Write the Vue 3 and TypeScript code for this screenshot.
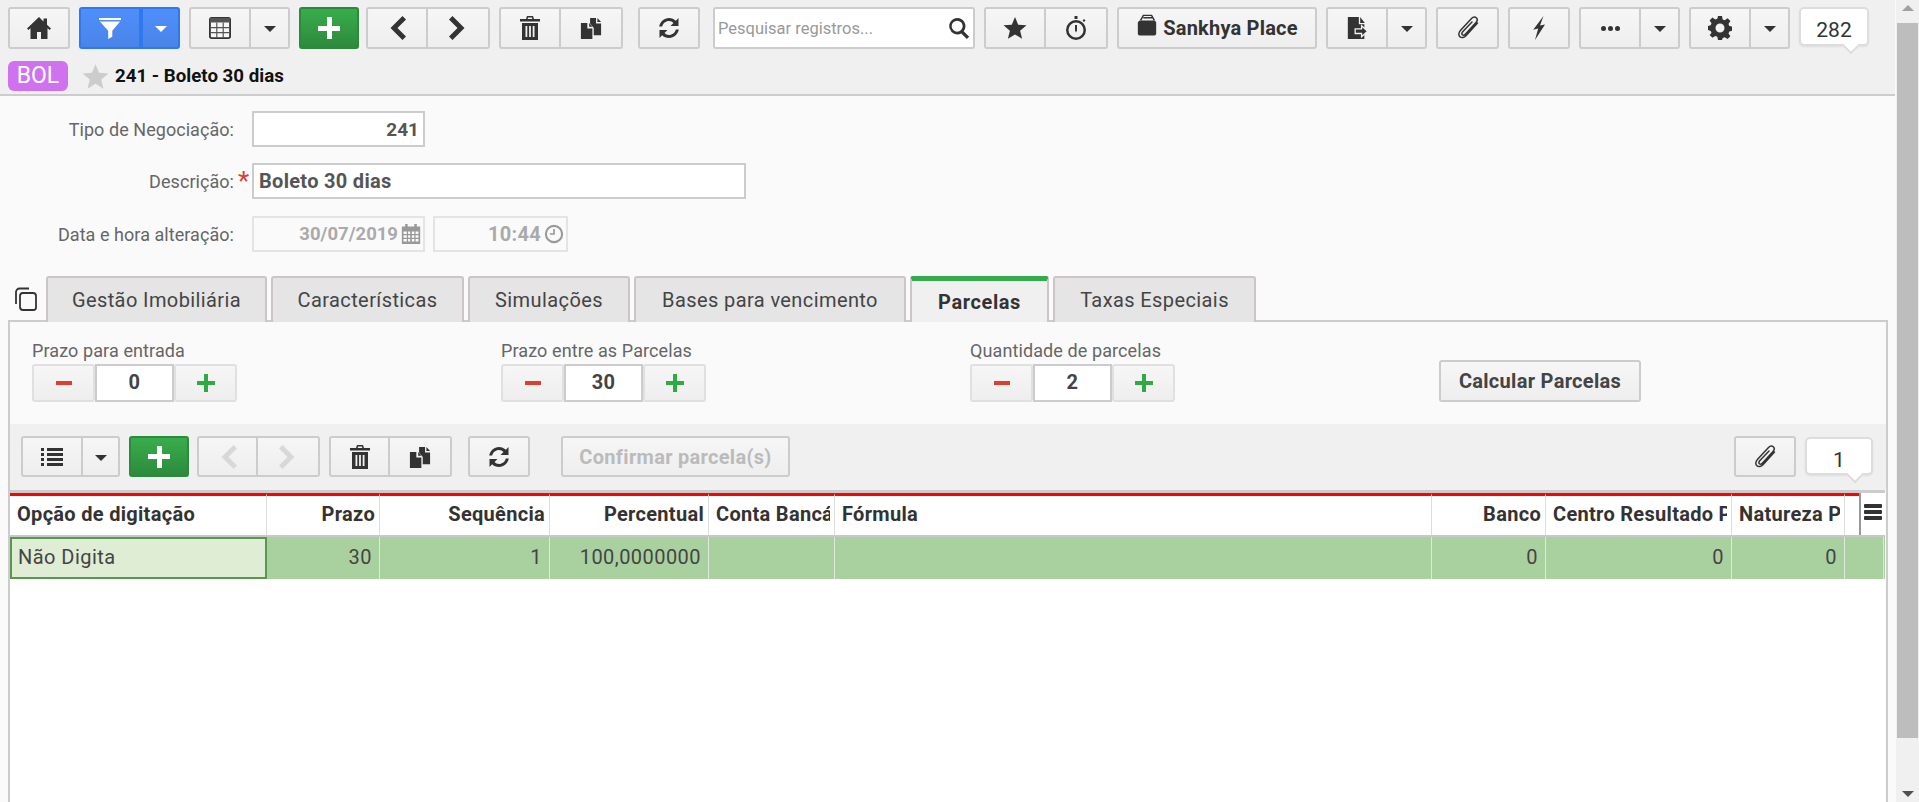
<script setup lang="ts">
interface Col { name: string; width: number; right: boolean; value: string }
const cols: Col[] = [
  { name: 'Opção de digitação', width: 257, right: false, value: 'Não Digita' },
  { name: 'Prazo', width: 113, right: true, value: '30' },
  { name: 'Sequência', width: 170, right: true, value: '1' },
  { name: 'Percentual', width: 159, right: true, value: '100,0000000' },
  { name: 'Conta Bancária', width: 126, right: false, value: '' },
  { name: 'Fórmula', width: 597, right: false, value: '' },
  { name: 'Banco', width: 114, right: true, value: '0' },
  { name: 'Centro Resultado Padrão', width: 186, right: false, value: '0' },
  { name: 'Natureza Padrão', width: 113, right: false, value: '0' },
  { name: '', width: 39, right: false, value: '' },
]
const template = cols.map((c) => c.width + 'px').join(' ')
const steppers = [
  { label: 'Prazo para entrada', value: '0', cls: 's1' },
  { label: 'Prazo entre as Parcelas', value: '30', cls: 's2' },
  { label: 'Quantidade de parcelas', value: '2', cls: 's3' },
]
const tabs = [
  { name: 'Gestão Imobiliária', cls: 't1' },
  { name: 'Características', cls: 't2' },
  { name: 'Simulações', cls: 't3' },
  { name: 'Bases para vencimento', cls: 't4' },
  { name: 'Parcelas', cls: 't5 active' },
  { name: 'Taxas Especiais', cls: 't6' },
]
</script>

<template>
  <div class="root">
    <svg class="defs" width="0" height="0">
      <defs>
        <symbol id="i-home" viewBox="0 0 24 24"><path d="M12 1 0 12.600l1.400 1.400L3.500 12.200V23H10v-7h4v7h6.500V12.200l2.100 1.800L24 12.600l-4-3.800V2.500h-3.500v3z"/></symbol>
        <symbol id="i-filter" viewBox="0 0 24 24"><path d="M0 1h24v2.300H0zM1 5h22l-8.500 10v6.500L10 24v-9z"/></symbol>
        <symbol id="i-grid" viewBox="0 0 24 24"><rect x="1" y="1" width="22" height="22" rx="2" fill="#f7f7f7" stroke="#333" stroke-width="2"/><path fill="#555" d="M1 1h22v5H1z"/><path fill="none" stroke="#555" stroke-width="1.300" d="M1 11.500h22M1 17h22M8.500 6v17M15.500 6v17"/></symbol>
        <symbol id="i-left" viewBox="0 0 24 24"><path d="M17.500 0 21 3.500 12.500 12l8.500 8.500-3.500 3.500L5.500 12z"/></symbol>
        <symbol id="i-right" viewBox="0 0 24 24"><path d="M6.500 0 3 3.500 11.500 12 3 20.500 6.500 24l12-12z"/></symbol>
        <symbol id="i-trash" viewBox="0 0 24 24"><path fill-rule="evenodd" d="M9 0h6l1 3h6v2.500H2V3h6zm1 1.500L9.700 3h4.600L14 1.500zM4 7h16v17H4zm3.500 3v11h1.800V10zm3.600 0v11h1.800V10zm3.600 0v11h1.800V10z"/></symbol>
        <symbol id="i-copy" viewBox="0 0 24 24"><path d="M1 6.500h7v6h5.500V24H1zM10 6.500l3.500 4H10zM11 1h6.500v6H23v13h-8V12l-4-5zM19 1l4 4.500h-4z"/></symbol>
        <symbol id="i-refresh" viewBox="0 0 24 24"><path d="M12 2c2.700 0 5.100 1.100 6.900 2.800L21.500 2v8h-8l3-3C15.400 5.800 13.800 5 12 5 8.700 5 6 7.300 5.200 10.500H2.200C3 5.700 7.100 2 12 2zM2.500 22v-8h8l-3 3c1.100 1.200 2.700 2 4.500 2 3.300 0 6-2.300 6.800-5.500h3C21 18.300 16.900 22 12 22c-2.700 0-5.100-1.100-6.900-2.800z"/></symbol>
        <symbol id="i-search" viewBox="0 0 24 24"><path fill-rule="evenodd" d="M10 1a9 9 0 0 1 7.100 14.500l6 6-2.600 2.500-6-6A9 9 0 1 1 10 1zm0 3a6 6 0 1 0 0 12 6 6 0 0 0 0-12z"/></symbol>
        <symbol id="i-star" viewBox="0 0 24 24"><path d="m12 1 3.200 7.700 8.300.6-6.400 5.400 2 8.100L12 18.500 4.900 22.800l2-8.100L.5 9.300l8.300-.6z"/></symbol>
        <symbol id="i-watch" viewBox="0 0 24 24"><path fill-rule="evenodd" d="M10.500 0h3v3h-3zM20 3l1.500 1.500-1.500 1.500L18.500 4.500zM12 4a10 10 0 1 1 0 20 10 10 0 0 1 0-20zm0 2.500a7.500 7.500 0 1 0 0 15 7.500 7.500 0 0 0 0-15zM11 9h2v5.500l-1 2-1-2z"/></symbol>
        <symbol id="i-bag" viewBox="0 0 24 24"><path d="M4 7h16.500l1.500 2v12.500a2 2 0 0 1-2 2H4a2 2 0 0 1-2-2V9z"/><path fill="none" stroke="#333" stroke-width="1.600" d="M5 7 8 1.500h9L20 7M8 4h11"/></symbol>
        <symbol id="i-export" viewBox="0 0 24 24"><path d="M2 0h12v8h6v16H2zM15.500 0l5 6.500h-5z"/><path fill="#333" stroke="#f2f2f2" stroke-width="1.400" d="M10 13h7v-3.500l6.500 6-6.500 6V18h-7z"/></symbol>
        <symbol id="i-clip" viewBox="0 0 24 24"><path fill="none" stroke="currentColor" stroke-width="1.500" stroke-linecap="round" d="M21.500 7 10.200 19.500c-2 2.200-4.700 2.700-6.300 1.200-1.700-1.500-1.300-4.200.7-6.400L15.500 2.500c1.400-1.500 3.500-1.900 4.800-.7 1.300 1.200 1.100 3.200-.3 4.800L9.300 18.200c-.9 1-2.100 1.200-2.900.5-.7-.7-.6-1.900.3-2.900L16 6"/></symbol>
        <symbol id="i-bolt" viewBox="0 0 24 24"><path d="M16.500 0 13 9.500l5-1L8 24l3.200-11.500-5 1.200z"/></symbol>
        <symbol id="i-gear" viewBox="0 0 24 24"><path fill-rule="evenodd" d="M10 0h4l.7 3.400 2 .8L19.600 2.300l2.800 2.800-1.900 2.900.8 2 3.400.7v4l-3.400.7-.8 2 1.900 2.900-2.800 2.800-2.900-1.900-2 .8L14 24h-4l-.7-3.300-2-.8-2.900 1.900-2.800-2.800L3.500 17l-.8-2L0 14v-4l2.700-.7.800-2-1.900-2.900 2.800-2.800 2.900 1.900 2-.8zM12 7.500a4.500 4.500 0 1 0 0 9 4.500 4.500 0 0 0 0-9z"/></symbol>
        <symbol id="i-list" viewBox="0 0 24 24"><path d="M1 3h3v3H1zM7 3h16v3H7zM1 8h3v3H1zM7 8h16v3H7zM1 13h3v3H1zM7 13h16v3H7zM1 18h3v3H1zM7 18h16v3H7z"/></symbol>
        <symbol id="i-cal" viewBox="0 0 24 24"><path fill-rule="evenodd" d="M5 0h3v3h8V0h3v3h4v21H1V3h4zM3 9v3h4V9zm5.500 0v3H11V9zm4.500 0v3h3V9zm4.500 0v3H21V9zM3 13.500v3h4v-3zm5.500 0v3H11v-3zm4.500 0v3h3v-3zm4.500 0v3H21v-3zM3 18v3h4v-3zm5.500 0v3H11v-3zm4.500 0v3h3v-3zm4.500 0v3H21v-3z"/></symbol>
        <symbol id="i-clock" viewBox="0 0 24 24"><path fill-rule="evenodd" d="M12 1a11 11 0 1 1 0 22 11 11 0 0 1 0-22zm0 2.500a8.500 8.500 0 1 0 0 17 8.500 8.500 0 0 0 0-17zM11 6h2v7H7v-2h4z"/></symbol>
        <symbol id="i-tabs" viewBox="0 0 24 24"><path fill="none" stroke="currentColor" stroke-width="1.800" d="M2 17V5a3.500 3.500 0 0 1 3.500-3.500H15M9 6h10a3 3 0 0 1 3 3v11.500a2.500 2.500 0 0 1-2.500 2.500H9a3 3 0 0 1-3-3V9a3 3 0 0 1 3-3z"/></symbol>
      </defs>
    </svg>

    <main class="page">
      <header class="head">
        <div class="toolbar">
          <button class="btn w62"><svg class="ic i24"><use href="#i-home" /></svg></button>
          <div class="group blue">
            <button class="btn w62"><svg class="ic i22"><use href="#i-filter" /></svg></button>
            <button class="btn caret-btn"><i class="caret"></i></button>
          </div>
          <div class="group">
            <button class="btn w62"><svg class="ic i22"><use href="#i-grid" /></svg></button>
            <button class="btn caret-btn"><i class="caret"></i></button>
          </div>
          <button class="btn green w60"><span class="plus"></span></button>
          <div class="group tight">
            <button class="btn w62"><svg class="ic i24"><use href="#i-left" /></svg></button>
            <button class="btn w62"><svg class="ic i24"><use href="#i-right" /></svg></button>
          </div>
          <div class="group">
            <button class="btn w62"><svg class="ic i24"><use href="#i-trash" /></svg></button>
            <button class="btn w62"><svg class="ic i22"><use href="#i-copy" /></svg></button>
          </div>
          <button class="btn w62 ml16"><svg class="ic i24"><use href="#i-refresh" /></svg></button>
          <div class="search ml13">
            <span>Pesquisar registros...</span>
            <svg class="ic i22 dark"><use href="#i-search" /></svg>
          </div>
          <div class="group">
            <button class="btn w62"><svg class="ic i24"><use href="#i-star" /></svg></button>
            <button class="btn w62"><svg class="ic i24"><use href="#i-watch" /></svg></button>
          </div>
          <button class="btn place">
            <svg class="ic i22 bag"><use href="#i-bag" /></svg>Sankhya Place
          </button>
          <div class="group">
            <button class="btn w62"><svg class="ic i22"><use href="#i-export" /></svg></button>
            <button class="btn caret-btn"><i class="caret"></i></button>
          </div>
          <button class="btn w63"><svg class="ic i24"><use href="#i-clip" /></svg></button>
          <button class="btn w62"><svg class="ic i24"><use href="#i-bolt" /></svg></button>
          <div class="group">
            <button class="btn w62"><span class="dots"><i></i><i></i><i></i></span></button>
            <button class="btn caret-btn"><i class="caret"></i></button>
          </div>
          <div class="group">
            <button class="btn w62"><svg class="ic i24"><use href="#i-gear" /></svg></button>
            <button class="btn caret-btn"><i class="caret"></i></button>
          </div>
          <div class="count count-top"><span>282</span></div>
        </div>
        <div class="title-row">
          <span class="badge">BOL</span>
          <svg class="ic title-star"><use href="#i-star" /></svg>
          <span class="title">241 - Boleto 30 dias</span>
        </div>
      </header>

      <section class="form">
        <div class="form-row r1">
          <label>Tipo de Negociação:</label>
          <div class="input code">241</div>
        </div>
        <div class="form-row r2">
          <label>Descrição:</label>
          <span class="req">*</span>
          <div class="input desc">Boleto 30 dias</div>
        </div>
        <div class="form-row r3">
          <label>Data e hora alteração:</label>
          <div class="input off date">30/07/2019<svg class="ic i20 mut"><use href="#i-cal" /></svg></div>
          <div class="input off time">10:44<svg class="ic i20 mut"><use href="#i-clock" /></svg></div>
        </div>
      </section>

      <div class="tabs">
        <svg class="ic tabs-ic"><use href="#i-tabs" /></svg>
        <div v-for="t in tabs" :key="t.name" class="tab" :class="t.cls">{{ t.name }}</div>
      </div>

      <section class="panel">
        <div class="params">
          <div v-for="s in steppers" :key="s.label" class="param" :class="s.cls">
            <div class="param-label">{{ s.label }}</div>
            <div class="stepper">
              <button class="st-btn"><span class="minus"></span></button>
              <div class="st-val">{{ s.value }}</div>
              <button class="st-btn"><span class="plus small"></span></button>
            </div>
          </div>
          <button class="btn calc">Calcular Parcelas</button>
        </div>

        <div class="subbar">
          <div class="group first">
            <button class="btn w62"><svg class="ic i24"><use href="#i-list" /></svg></button>
            <button class="btn caret-btn"><i class="caret"></i></button>
          </div>
          <button class="btn green w60"><span class="plus"></span></button>
          <div class="group nudge">
            <button class="btn w61"><svg class="ic i24 faint"><use href="#i-left" /></svg></button>
            <button class="btn w62"><svg class="ic i24 faint"><use href="#i-right" /></svg></button>
          </div>
          <div class="group">
            <button class="btn w61"><svg class="ic i24"><use href="#i-trash" /></svg></button>
            <button class="btn w62"><svg class="ic i22"><use href="#i-copy" /></svg></button>
          </div>
          <button class="btn w62 ml16sub"><svg class="ic i24"><use href="#i-refresh" /></svg></button>
          <button class="btn confirm">Confirmar parcela(s)</button>
          <button class="btn w62 push"><svg class="ic i24"><use href="#i-clip" /></svg></button>
          <div class="count count-sub"><span>1</span></div>
        </div>

        <div class="grid">
          <div class="grid-head" :style="{ gridTemplateColumns: template }">
            <div v-for="c in cols" :key="c.name" class="th" :class="{ right: c.right }"><span>{{ c.name }}</span></div>
            <div class="grid-menu"><i></i><i></i><i></i></div>
          </div>
          <div class="grid-row" :style="{ gridTemplateColumns: template }">
            <div v-for="(c, i) in cols" :key="c.name" class="td" :class="{ right: c.value !== '' && i > 0, sel: i === 0 }">{{ c.value }}</div>
          </div>
        </div>
      </section>
    </main>

    <aside class="scroll">
      <i class="arrow up"></i>
      <div class="thumb"></div>
      <i class="arrow down"></i>
    </aside>
  </div>
</template>

<style>
html, body { margin: 0; height: 100%; overflow: hidden; background: #fafafa; }
</style>

<style scoped>
.root { display: flex; width: 1919px; height: 802px; overflow: hidden; font-family: Roboto, "Liberation Sans", sans-serif; color: #444; background: #fafafa; }
.defs { position: absolute; }
.page { width: 1896px; flex: none; display: flex; flex-direction: column; }

.ic { display: block; fill: #333; color: #333; flex: none; }
.i20 { width: 20px; height: 20px; }
.i22 { width: 22px; height: 22px; }
.i24 { width: 24px; height: 24px; }
.faint { fill: #d8d8d8; color: #d8d8d8; }
.mut { fill: #999; color: #999; }

.head { height: 94px; border-bottom: 2px solid #ccc; background: #f0f0f0; margin-right: 1px; }
.toolbar { display: flex; align-items: flex-start; gap: 9px; padding: 7px 0 0 8px; height: 42px; }
.btn { display: flex; align-items: center; justify-content: center; height: 42px; padding: 0; box-sizing: border-box; border: 2px solid #ccc; border-radius: 3px; background: linear-gradient(#f6f6f6, #eee); font: inherit; }
.w60 { width: 60px; }
.w61 { width: 61px; }
.w62 { width: 62px; }
.w63 { width: 63px; }
.ml16 { margin-left: 6px; }
.ml16sub { margin-left: 7px; }
.ml13 { margin-left: 4px; }
.tight { margin-left: -2px; }
.nudge { margin-left: -1px; }
.group { display: flex; }
.group .btn { border-radius: 0; }
.group .btn:first-child { border-radius: 3px 0 0 3px; }
.group .btn:last-child { border-radius: 0 3px 3px 0; border-left: 0; }
.caret-btn { width: 39px; }
.first .caret-btn { width: 37px; }
.caret { width: 0; height: 0; border: 6px solid transparent; border-top: 6px solid #333; border-bottom: 0; display: block; margin-top: 2px; }
.blue .btn { background: linear-gradient(#4f8ffb, #4984e8); border-color: #2f78ee; }
.blue .btn:last-child { border-left: 2px solid #2f78ee; width: 39px; }
.blue .ic { fill: #fff; }
.blue .caret { border-top-color: #fff; }
.green { background: linear-gradient(#38ad4c, #2d8a3d); border-color: #2b8a3b; }
.plus { display: block; width: 22px; height: 22px; background: linear-gradient(#fff, #fff) center / 100% 5px no-repeat, linear-gradient(#fff, #fff) center / 5px 100% no-repeat; }
.plus.small { width: 18px; height: 18px; background: linear-gradient(#2faa44, #2faa44) center / 100% 4px no-repeat, linear-gradient(#2faa44, #2faa44) center / 4px 100% no-repeat; }
.minus { display: block; width: 16px; height: 4px; background: #d9402f; }

.search { display: flex; align-items: center; justify-content: space-between; width: 262px; height: 42px; box-sizing: border-box; border: 2px solid #ccc; border-radius: 3px; background: #fff; padding: 0 3px 0 3px; font-size: 16.5px; color: #999; }
.dark { fill: #333; }
.place { width: 200px; font-size: 20px; font-weight: 700; color: #333; letter-spacing: .2px; }
.bag { margin-right: 5px; margin-top: -7px; }
.dots { display: flex; gap: 2px; }
.dots i { width: 5px; height: 5px; border-radius: 50%; background: #333; display: block; }

.count { position: relative; background: #fff; border: 2px solid #ddd; border-radius: 5px; box-sizing: border-box; text-align: center; color: #333; box-shadow: 0 1px 2px rgba(0,0,0,.08); }
.count span { position: relative; z-index: 1; }
.count::after { content: ""; position: absolute; box-sizing: border-box; width: 12px; height: 12px; background: #fff; border-right: 2px solid #ddd; border-bottom: 2px solid #ddd; transform: rotate(45deg); right: 10px; bottom: -8px; }
.count-top { width: 70px; height: 39px; font-size: 21px; line-height: 42px; }
.count-sub { width: 68px; height: 38px; font-size: 21px; line-height: 42px; margin-top: 1px; margin-right: 13px; }

.title-row { display: flex; align-items: center; height: 30px; margin: 12px 0 0 8px; }
.badge { width: 60px; height: 30px; background: #d071f0; color: #fff; border-radius: 6px; text-align: center; font-size: 23px; line-height: 30px; }
.title-star { width: 27px; height: 27px; margin-left: 14px; fill: #ccc; color: #ccc; }
.title { margin-left: 6px; font-size: 18.7px; font-weight: 700; color: #111; }

.form { padding-top: 15px; height: 180px; box-sizing: border-box; }
.form-row { display: flex; align-items: center; height: 36px; position: relative; padding-left: 252px; }
.form-row label { position: absolute; right: calc(100% - 234px); white-space: nowrap; font-size: 18px; letter-spacing: .05px; color: #666; }
.r2 { margin-top: 16px; }
.r3 { margin-top: 17px; }
.req { position: absolute; left: 238px; top: 5px; color: #d9402f; font-size: 26px; line-height: 26px; }
.input { box-sizing: border-box; height: 36px; border: 2px solid #ccc; background: #fff; font-size: 20px; letter-spacing: .3px; font-weight: 700; color: #555; display: flex; align-items: center; }
.code { width: 173px; justify-content: flex-end; padding-right: 4px; font-size: 19px; letter-spacing: 0; }
.desc { width: 494px; padding-left: 5px; }
.off { background: #fafafa; border-color: #e4e4e4; color: #aaa; justify-content: flex-end; padding-right: 2px; gap: 3px; }
.date { width: 173px; font-size: 18.5px; letter-spacing: 0; }
.time { width: 135px; margin-left: 8px; }

.tabs { display: flex; height: 44px; position: relative; z-index: 1; }
.tabs-ic { position: absolute; left: 14px; top: 11px; width: 24px; height: 24px; fill: none; }
.tab { box-sizing: border-box; height: 46px; border: 2px solid #ccc5c5; border-bottom: 0; border-radius: 3px 3px 0 0; background: #e5e5e5; display: flex; align-items: center; justify-content: center; font-size: 20px; letter-spacing: .4px; color: #444; margin-right: 4px; }
.t1 { margin-left: 46px; width: 221px; }
.t2 { width: 193px; }
.t3 { width: 162px; }
.t4 { width: 272px; }
.t5 { width: 139px; }
.t6 { width: 203px; }
.active { background: #f0f0f0; border: 0; border-top: 5px solid #33aa4c; border-left: 2px solid #ccc5c5; border-right: 2px solid #ccc5c5; font-weight: 700; letter-spacing: .6px; color: #333; }

.panel { margin-left: 8px; width: 1880px; flex: 1; box-sizing: border-box; border: 2px solid #ccc; border-bottom: 0; background: #fafafa; display: flex; flex-direction: column; min-height: 0; }
.params { height: 102px; flex: none; position: relative; box-sizing: border-box; padding: 18px 0 0 22px; display: flex; }
.param { width: 469px; }
.param-label { font-size: 18px; letter-spacing: .1px; color: #666; line-height: 22px; }
.stepper { display: flex; height: 38px; margin-top: 2px; width: 205px; }
.st-btn { width: 63px; flex: none; border: 2px solid #e0e0e0; background: linear-gradient(#f6f6f6, #eee); display: flex; align-items: center; justify-content: center; padding: 0; border-radius: 3px; box-sizing: border-box; }
.st-val { flex: 1; border: 2px solid #ccc; background: #fff; font-size: 20px; letter-spacing: .3px; font-weight: 700; color: #444; display: flex; align-items: center; justify-content: center; padding-bottom: 3px; box-sizing: border-box; }
.calc { position: absolute; left: 1429px; top: 38px; width: 202px; height: 42px; font-size: 20px; letter-spacing: .3px; font-weight: 700; color: #444; }

.subbar { height: 66px; flex: none; background: #f0f0f0; display: flex; align-items: flex-start; gap: 9px; padding: 12px 0 0 11px; box-sizing: border-box; }
.subbar .btn { height: 41px; }
.confirm { width: 229px; margin-left: 22px; font-size: 20px; letter-spacing: .3px; font-weight: 700; color: #bbb; }
.push { margin-left: auto; }

.grid { flex: 1; background: #fff; border-top: 3px solid #ccc; margin-right: 1px; }
.grid-head { position: relative; display: grid; height: 42px; border-bottom: 2px solid #c8c8c8; background: #fff; }
.th { position: relative; border-top: 3px solid #f00; border-right: 1px solid #ddd; font-size: 20px; letter-spacing: .3px; font-weight: 700; color: #333; display: flex; align-items: center; padding: 0 4px 3px 7px; overflow: hidden; white-space: nowrap; box-sizing: border-box; }
.th span { overflow: hidden; }
.th.right { justify-content: flex-end; }
.grid-menu { position: absolute; right: 3px; top: 11px; width: 18px; display: flex; flex-direction: column; gap: 2px; z-index: 1; }
.grid-menu i { display: block; height: 4px; background: #333; border-radius: 1px; }
.grid-head::after { content: ""; position: absolute; right: 0; top: 0; bottom: 0; width: 26px; background: #fff; border-left: 2px solid #999; box-sizing: border-box; z-index: 0; }
.grid-row { display: grid; height: 42px; background: #a9d1a0; }
.td { border-right: 1px solid #dfe8dc; font-size: 20px; letter-spacing: .45px; color: #444; padding: 0 5px 2px; display: flex; align-items: center; box-sizing: border-box; }
.td.right { justify-content: flex-end; padding-right: 7px; }
.td.sel { background: #deedd4; border: 2px solid #5a9650; padding-left: 6px; }

.scroll { flex: 1; background: #f0f0f0; position: relative; }
.thumb { position: absolute; left: 1px; right: 1px; top: 23px; height: 715px; background: #bdbdbd; }
.arrow { position: absolute; left: 6px; width: 0; height: 0; border: 6px solid transparent; }
.up { top: 5px; border-top: 0; border-bottom: 6px solid #a0a0a0; }
.down { bottom: 5px; border-bottom: 0; border-top: 6px solid #505050; }
</style>
